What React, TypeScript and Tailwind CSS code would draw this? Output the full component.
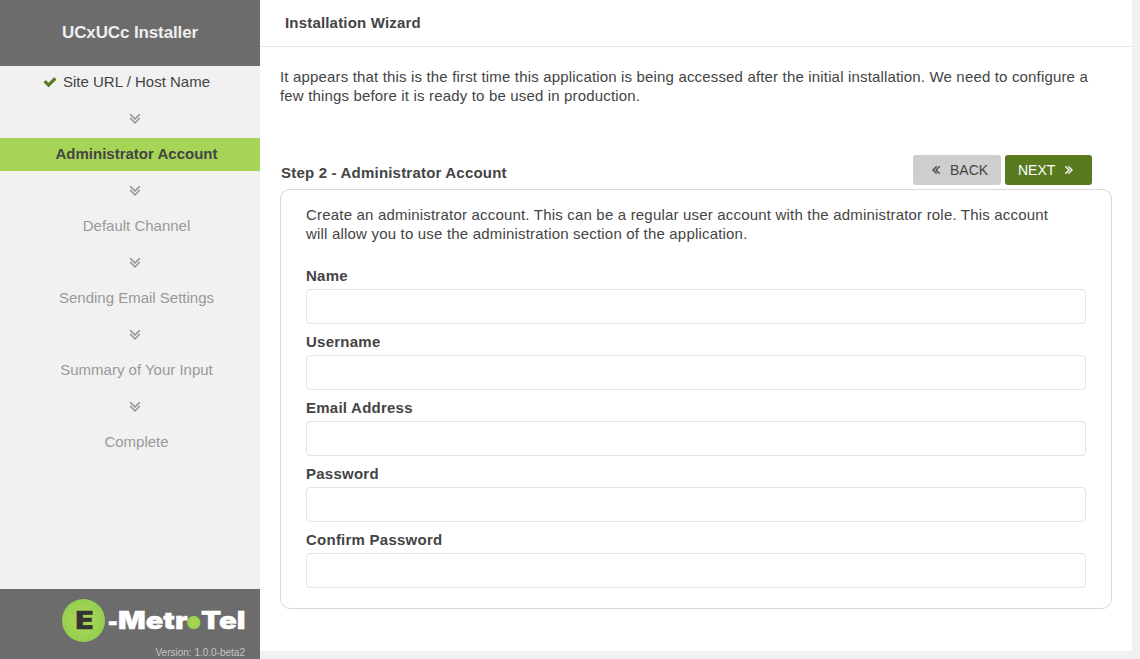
import { Fragment } from 'react';

const DOUBLE_ANGLE =
  'M1395 864q0 13-10 23l-466 466q-10 10-23 10t-23-10l-466-466q-10-10-10-23t10-23l50-50q10-10 23-10t23 10l393 393 393-393q10-10 23-10t23 10l50 50q10 10 10 23zm0-384q0 13-10 23l-466 466q-10 10-23 10t-23-10l-466-466q-10-10-10-23t10-23l50-50q10-10 23-10t23 10l393 393 393-393q10-10 23-10t23 10l50 50q10 10 10 23z';
const CHECK =
  'M1671 566q0 40-28 68l-724 724-136 136q-28 28-68 28t-68-28l-136-136-362-362q-28-28-28-68t28-68l136-136q28-28 68-28t68 28l294 295 656-657q28-28 68-28t68 28l136 136q28 28 28 68z';

function Icon({ d, className }: { d: string; className: string }) {
  return (
    <svg viewBox="0 0 1792 1792" fill="currentColor" stroke="currentColor" strokeWidth="45" className={className} aria-hidden="true">
      <path d={d} />
    </svg>
  );
}

type Status = 'done' | 'active' | 'pending';

const steps: { label: string; status: Status }[] = [
  { label: 'Site URL / Host Name', status: 'done' },
  { label: 'Administrator Account', status: 'active' },
  { label: 'Default Channel', status: 'pending' },
  { label: 'Sending Email Settings', status: 'pending' },
  { label: 'Summary of Your Input', status: 'pending' },
  { label: 'Complete', status: 'pending' },
];

const stepStyles: Record<Status, string> = {
  done: 'text-[#444] pr-[7px]',
  active: 'bg-[#a6d457] text-[#444] font-bold pl-[13px]',
  pending: 'text-[#999] pl-[13px]',
};

const fields = [
  { label: 'Name', type: 'text' },
  { label: 'Username', type: 'text' },
  { label: 'Email Address', type: 'email' },
  { label: 'Password', type: 'password' },
  { label: 'Confirm Password', type: 'password' },
];

function Logo() {
  return (
    <svg viewBox="0 0 184 44" className="h-[44px] w-[184px]" role="img" aria-label="E-MetroTel">
      <defs>
        <radialGradient id="ball">
          <stop offset="0" stopColor="#b3d456" />
          <stop offset="1" stopColor="#93d050" />
        </radialGradient>
      </defs>
      <circle cx="22.5" cy="22.5" r="21.5" fill="url(#ball)" />
      <g className="font-['Inter'] font-black" fontSize="24">
        <text x="14.6" y="31" fill="#333" stroke="#333" strokeWidth="0.4" textLength="18" lengthAdjust="spacingAndGlyphs">E</text>
        <g fill="#fff" stroke="#fff" strokeWidth="0.4">
          <text x="46.5" y="32" textLength="10.5" lengthAdjust="spacingAndGlyphs">-</text>
          <text x="57" y="31" textLength="69.5" lengthAdjust="spacingAndGlyphs">Metr</text>
          <text x="140" y="31" textLength="44.5" lengthAdjust="spacingAndGlyphs">Tel</text>
        </g>
      </g>
      <circle cx="132.7" cy="24.5" r="6.7" fill="url(#ball)" />
    </svg>
  );
}

function Sidebar() {
  return (
    <aside className="flex w-[260px] shrink-0 flex-col bg-[#f1f1f1]">
      <header className="flex h-[66px] items-center justify-center bg-[#6c6c6c] pb-[2px] text-[17px] font-bold tracking-[-0.12px] text-[#eee]">
        UCxUCc Installer
      </header>
      <nav className="flex flex-1 flex-col text-[15px]">
        {steps.map((step, i) => (
          <Fragment key={step.label}>
            {i > 0 && (
              <div className="flex h-[39px] items-center justify-center pl-[9px] text-[#999]">
                <Icon d={DOUBLE_ANGLE} className="size-[18px]" />
              </div>
            )}
            <div className={`flex h-[33px] items-center justify-center pb-[2px] ${stepStyles[step.status]}`}>
              {step.status === 'done' && <Icon d={CHECK} className="mr-[6px] size-[14px] text-[#5a7a20]" />}
              {step.label}
            </div>
          </Fragment>
        ))}
      </nav>
      <footer className="flex h-[70px] flex-col items-end bg-[#6c6c6c] pt-[9px] pr-[15px]">
        <Logo />
        <div className="mt-[5px] text-[10px] leading-[12px] text-[#c4c4c4]">Version: 1.0.0-beta2</div>
      </footer>
    </aside>
  );
}

export default function App() {
  return (
    <div className="flex h-[659px] w-[1140px] overflow-hidden bg-[#f1f1f1] font-['Liberation_Sans',Arial,sans-serif] text-[15px] leading-[19px] text-[#444]">
      <Sidebar />
      <main className="h-[651px] w-[872px] bg-white">
        <h1 className="h-[47px] border-b border-[#e7e7e7] pt-[13px] pl-[25px] font-bold tracking-[0.18px]">
          Installation Wizard
        </h1>
        <p className="pt-[20px] pl-[20px] tracking-[0.165px]">
          It appears that this is the first time this application is being accessed after the initial installation. We need to configure a
          <br />
          few things before it is ready to be used in production.
        </p>
        <div className="mt-[50px] flex h-[30px] justify-between pr-[40px] pl-[21px]">
          <h2 className="pt-[8px] font-bold tracking-[0.2px]">Step 2 - Administrator Account</h2>
          <div className="flex gap-1 text-[14px]">
            <button className="flex w-[88px] items-center rounded-[3px] bg-[#cecece] pl-[16px] text-[#444]">
              <Icon d={DOUBLE_ANGLE} className="mr-[7px] size-[14px] rotate-90" />
              BACK
            </button>
            <button className="flex w-[87px] items-center rounded-[3px] bg-[#5a7a20] pl-[13px] text-white">
              NEXT
              <Icon d={DOUBLE_ANGLE} className="ml-[7px] size-[14px] -rotate-90" />
            </button>
          </div>
        </div>
        <form className="mt-[4px] ml-[20px] h-[420px] w-[832px] rounded-[10px] border border-[#d9d9d9] px-[25px] pt-[15px]">
          <p className="tracking-[0.19px]">
            Create an administrator account. This can be a regular user account with the administrator role. This account
            <br />
            will allow you to use the administration section of the application.
          </p>
          <div className="mt-[23px] flex flex-col gap-[8px]">
            {fields.map((field) => (
              <label key={field.label} className="block font-bold tracking-[0.24px]">
                <span className="block h-[23px]">{field.label}</span>
                <input
                  type={field.type}
                  className="block h-[35px] w-full rounded-[4px] border border-[#e3e3e3] bg-white px-3 outline-none"
                />
              </label>
            ))}
          </div>
        </form>
      </main>
    </div>
  );
}
